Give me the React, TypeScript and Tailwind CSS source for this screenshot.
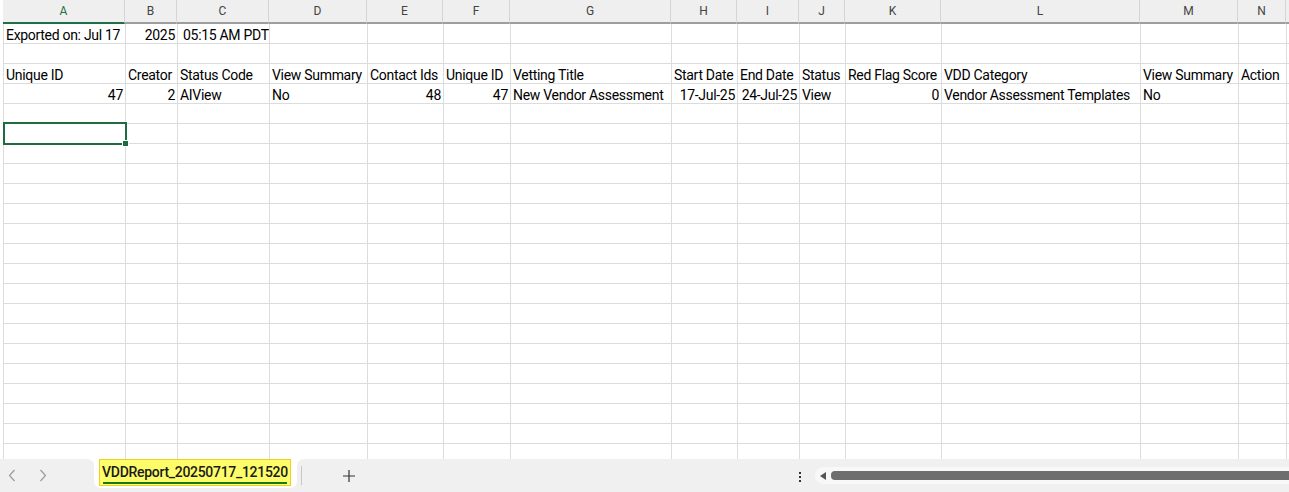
import React from "react";

type Col = { l: string; w: string };
const cols: Col[] = [
  { l: "A", w: "w-[122px]" },
  { l: "B", w: "w-[52px]" },
  { l: "C", w: "w-[92px]" },
  { l: "D", w: "w-[98px]" },
  { l: "E", w: "w-[76px]" },
  { l: "F", w: "w-[67px]" },
  { l: "G", w: "w-[161px]" },
  { l: "H", w: "w-[66px]" },
  { l: "I", w: "w-[62px]" },
  { l: "J", w: "w-[46px]" },
  { l: "K", w: "w-[96px]" },
  { l: "L", w: "w-[199px]" },
  { l: "M", w: "w-[98px]" },
  { l: "N", w: "w-[48px]" },
];

type Cell = { t: string; r?: boolean; pad?: boolean };

const data: Record<number, Cell[]> = {
  0: [
    { t: "Exported on: Jul 17" },
    { t: "2025", r: true },
    { t: "05:15 AM PDT", pad: true },
  ],
  2: [
    { t: "Unique ID" },
    { t: "Creator" },
    { t: "Status Code" },
    { t: "View Summary" },
    { t: "Contact Ids" },
    { t: "Unique ID" },
    { t: "Vetting Title" },
    { t: "Start Date" },
    { t: "End Date" },
    { t: "Status" },
    { t: "Red Flag Score" },
    { t: "VDD Category" },
    { t: "View Summary" },
    { t: "Action" },
  ],
  3: [
    { t: "47", r: true },
    { t: "2", r: true },
    { t: "AIView" },
    { t: "No" },
    { t: "48", r: true },
    { t: "47", r: true },
    { t: "New Vendor Assessment" },
    { t: "17-Jul-25", r: true },
    { t: "24-Jul-25", r: true },
    { t: "View" },
    { t: "0", r: true },
    { t: "Vendor Assessment Templates" },
    { t: "No" },
    { t: "" },
  ],
};

const ROWS = 22;

export default function App() {
  return (
    <div
      className="relative w-[1289px] h-[492px] overflow-hidden bg-white text-black"
      style={{ fontFamily: "Roboto, 'Liberation Sans', sans-serif" }}
    >
      <div className="h-[459px] overflow-hidden">
        {/* column headers */}
        <div className="flex h-[24px] pl-[3px]">
          {cols.map((c, i) => (
            <div
              key={c.l}
              className={`${c.w} shrink-0 h-[24px] bg-[#efefef] border-r border-[#d5d5d5] border-b-2 flex justify-center pt-[4px] text-[12px] leading-[14px] ${
                i === 0
                  ? "border-b-[#1e7145] text-[#1e7145] bg-[#e2e2e2]"
                  : "border-b-[#9e9e9e] text-[#444]"
              }`}
            >
              {c.l}
            </div>
          ))}
          <div className="flex-1 h-[24px] bg-[#efefef] border-b-2 border-b-[#9e9e9e]" />
        </div>
        {/* rows */}
        <div className="pl-[3px]">
          <div className="border-l border-[#dcdcdc]">
            {Array.from({ length: ROWS }).map((_, ri) => {
              const row = data[ri] || [];
              return (
                <div key={ri} className="flex h-[20px]">
                  {cols.map((c, ci) => {
                    const cell = row[ci];
                    return (
                      <div
                        key={c.l}
                        className={`${c.w} shrink-0 h-[20px] border-r border-b border-[#dcdcdc] overflow-hidden whitespace-nowrap text-[14px] leading-[20px] pt-[1px] tracking-[-0.3px] ${
                          cell?.r ? "text-right pr-[2px]" : cell?.pad ? "pl-[5px]" : "pl-[2px]"
                        }`}
                      >
                        {cell ? cell.t : ""}
                      </div>
                    );
                  })}
                  <div className="flex-1 h-[20px] border-b border-[#dcdcdc]" />
                </div>
              );
            })}
          </div>
        </div>
      </div>

      {/* selection */}
      <div className="absolute left-[3px] top-[122px] w-[124px] h-[23px] border-2 border-[#1e6b40]" />
      <div className="absolute left-[122px] top-[140px] w-[7px] h-[7px] bg-[#1e6b40] border border-white" />

      {/* bottom bar */}
      <div className="flex h-[33px] bg-white">
        <div className="w-[94px] h-full bg-[#f0f0f0] rounded-tr-[7px] flex items-start pt-[8px] text-[#9a9a9a]">
          <svg width="8" height="13" viewBox="0 0 8 13" className="ml-[8px] mt-[2px]">
            <path d="M6.5 1 L1.5 6.5 L6.5 12" fill="none" stroke="currentColor" strokeWidth="1.2" />
          </svg>
          <svg width="8" height="13" viewBox="0 0 8 13" className="ml-[23px] mt-[2px]">
            <path d="M1.5 1 L6.5 6.5 L1.5 12" fill="none" stroke="currentColor" strokeWidth="1.2" />
          </svg>
        </div>
        <div className="w-[203px] h-full bg-[linear-gradient(to_bottom,#ffffff_50%,#f0f0f0_50%)]">
          <div className="w-full h-[29px] bg-white rounded-b-[7px] pl-[5px]">
            <div className="w-[192px] h-[27px] bg-[#fdfd6a] border border-[#f2cf1f] flex flex-col items-center">
              <div className="text-[14px] leading-[18px] mt-[3px] font-medium text-[#1a1a1a] tracking-[-0.3px]">
                VDDReport_20250717_121520
              </div>
              <div className="w-[184px] h-[2px] bg-[#167a1c] mt-[1px]" />
            </div>
          </div>
        </div>
        <div className="flex-1 h-full bg-[#f0f0f0] rounded-tl-[7px] flex items-center">
          <div className="w-px h-[19px] bg-[#c6c6c6] ml-[4px] mb-[1px]" />
          <svg width="14" height="14" viewBox="0 0 14 14" className="ml-[40px] text-[#333]">
            <path d="M7 1 V13 M1 7 H13" stroke="currentColor" strokeWidth="1.2" />
          </svg>
          <div className="ml-[443px] flex flex-col gap-[2px] items-center mt-[2px]">
            <div className="w-[2px] h-[2px] bg-[#333]" />
            <div className="w-[2px] h-[2px] bg-[#333]" />
            <div className="w-[2px] h-[2px] bg-[#333]" />
          </div>
          <div className="ml-[14px] flex-1 h-[17px] bg-[#f8f8f8] rounded-l-full flex items-center">
            <svg width="7" height="8" viewBox="0 0 7 8" className="ml-[5px]">
              <path d="M6 0 L0 4 L6 8 Z" fill="#555" />
            </svg>
            <div className="ml-[4px] flex-1 h-[9px] bg-[#6e6e6e] rounded-l-[4px]" />
          </div>
        </div>
      </div>
    </div>
  );
}
